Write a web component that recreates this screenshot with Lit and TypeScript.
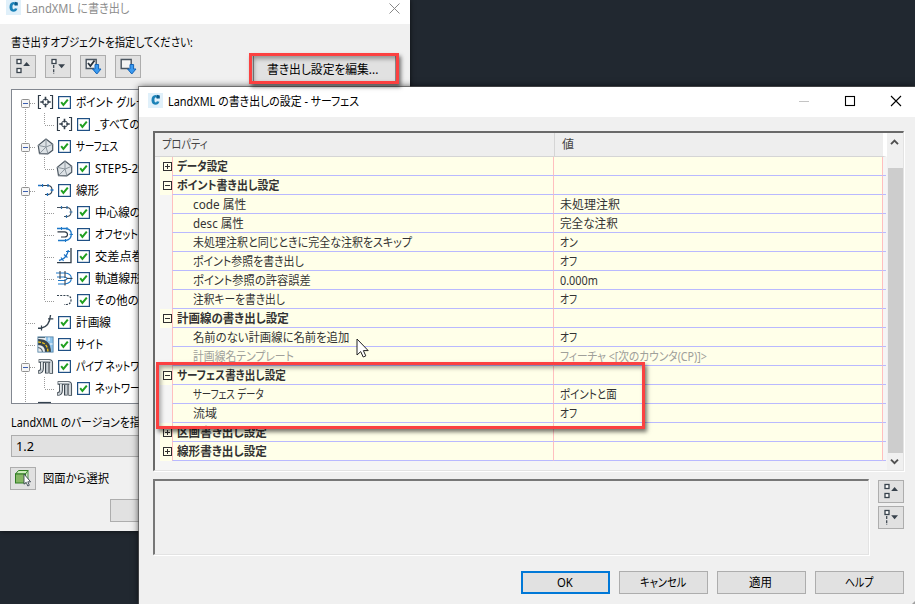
import { LitElement, html, svg, css, nothing } from "lit";
import { customElement, property } from "lit/decorators.js";
import { classMap } from "lit/directives/class-map.js";

/** A single-line label condensed or widened to the given width. */
@customElement("fit-label")
class FitLabel extends LitElement {
  @property() text = "";
  @property({ type: Number }) w = 0;

  static styles = css`
    :host { display: block; flex: none; white-space: pre; }
    .t { display: inline-block; transform-origin: 0 50%; font-feature-settings: "palt"; }
  `;

  render() {
    return html`<span class="t">${this.text}</span>`;
  }

  updated() {
    const span = this.renderRoot.querySelector(".t") as HTMLElement;
    this.style.width = this.w + "px";
    span.style.transform = "none";
    const natural = span.offsetWidth;
    if (natural) span.style.transform = `scaleX(${this.w / natural})`;
  }
}

const toolIcons: Record<string, unknown> = {
  collapse: svg`
    <rect x="7" y="4.5" width="4" height="4" fill="#fff" stroke="#38424c" stroke-width="1.3"/>
    <rect x="7" y="13.5" width="4" height="4" fill="#fff" stroke="#38424c" stroke-width="1.3"/>
    <path d="M13.2 11L16.6 7L20 11Z" fill="#38424c"/>`,
  expand: svg`
    <rect x="7" y="4.5" width="4" height="4" fill="#fff" stroke="#38424c" stroke-width="1.3"/>
    <path d="M8.7 10V19" stroke="#38424c" stroke-width="1.2" stroke-dasharray="3 1.3"/>
    <path d="M13.2 9.3L16.6 13.3L20 9.3Z" fill="#38424c"/>`,
  check: svg`
    <path d="M14 13.5H6.2V4.5H16.2V9" fill="#f4f4f4" stroke="#4a5560" stroke-width="1.4"/>
    <path d="M8 8L10.4 11L14.5 5.5" fill="none" stroke="#26303a" stroke-width="1.8"/>
    <path d="M15 9.5H18.6V14H21L16.8 19L12.6 14H15Z" fill="#3a9af0" stroke="#1464b8" stroke-width="1"/>`,
  uncheck: svg`
    <path d="M14 13.5H6.2V4.5H16.2V9" fill="#f4f4f4" stroke="#4a5560" stroke-width="1.4"/>
    <path d="M15 9.5H18.6V14H21L16.8 19L12.6 14H15Z" fill="#3a9af0" stroke="#1464b8" stroke-width="1"/>`,
  pick: svg`
    <path d="M5.5 7L8.5 3.5H18L16 7Z" fill="#cdeebb" stroke="#2e7d22"/>
    <path d="M15.5 7L18 3.5V13L15.5 16Z" fill="#d5e8cc" stroke="#2e7d22" stroke-width=".8"/>
    <rect x="5.5" y="7" width="10" height="9" fill="#86b765" stroke="#2e7d22"/>
    <path d="M14 7V17.2L16.2 15.3L17.8 19L19.3 18.3L17.8 14.8H20.6Z" fill="#fff" stroke="#3a4550" stroke-width=".9"/>`,
};

const treeIcons: Record<string, unknown> = {
  points: svg`<g fill="none" stroke="#303c48">
    <path d="M4 1.5H1.5V14.5H4M13 1.5H15.5V14.5H13" stroke-width="1.2"/>
    <circle cx="8.5" cy="8" r="3"/><path d="M8.5 2.8V6.4M8.5 9.6V13.2M3.3 8H6.9M10.1 8H13.7" stroke-width="1.6"/></g>`,
  surface: svg`<path d="M9 1L1.2 7.4L2.5 15.6L11 15.8L15.7 12.2V6.3Z" fill="#dde2e6" stroke="#4c5761" stroke-width="1.2" stroke-linejoin="round"/>
    <path d="M9 1V9L1.2 7.4M9 9L15.7 6.3M9 9L2.5 15.6M9 9L11 15.8" fill="none" stroke="#8c969e"/>`,
  align: svg`<path d="M2 3.5H11.5Q15 4 15 8T11.5 12.5H8" fill="none" stroke="#34424f" stroke-width="1.1"/>
    <path d="M1 3.5H4M5.5 2V5M11 2V5M13.5 8H16.5M10.5 11V14" stroke="#1d72c4" stroke-width="1.3"/>`,
  center: svg`<path d="M1 3.5H11.5Q15 4 15 8T11.5 12.5H8" fill="none" stroke="#46525e" stroke-width="1.1"/>
    <path d="M5.5 2V5M11 2V5M13.5 8H16.5M10.5 11V14" stroke="#2d6ea8" stroke-width="1.2"/>`,
  offset: svg`<path d="M1 2.5H10Q15.3 3.2 15.3 8.2T10 14.5H2" fill="none" stroke="#1d78c8" stroke-width="1.3"/>
    <path d="M1.5 5.8H8.5Q11.5 6 11.5 8.4T8.5 11H5" fill="none" stroke="#2c3742" stroke-width="1.2"/>
    <path d="M5.5 1V4M11 1V4M13.5 8.4H17M9.5 13V16" stroke="#1d78c8"/>`,
  cross: svg`<path d="M1 14.7H15V0" fill="none" stroke="#303c48" stroke-width="1.3"/>
    <path d="M3 12.5Q11 10.5 12.3 2" fill="none" stroke="#1d72c4" stroke-width="1.3"/>
    <path d="M5 9.5L7.5 13M8 6.5L11.5 9.5M10 3.5H14" stroke="#1d72c4" stroke-width="1.2"/>`,
  rail: svg`<path d="M0 3H9Q15.3 3.5 15.3 8.3T9 14H2M1 7H8Q11 7.2 11 8.5T8 10.5H2" fill="none" stroke="#1d78c8" stroke-width="1.1"/>
    <path d="M4 1V9M9 1V8M9 9.5V15.5M11 8.4H16.5" stroke="#2c3742"/>`,
  other: svg`<path d="M1 3.5H11Q15 4 15 8T11 12.5H8" fill="none" stroke="#34424f" stroke-width="1.2" stroke-dasharray="2 1.2"/>`,
  feature: svg`<path d="M1 14.2H4Q12.5 13 13.5 1" fill="none" stroke="#34424f" stroke-width="1.4"/>
    <path d="M11 4.8H16.3M4.5 11.5V16.5" stroke="#34424f" stroke-width="1.2"/>`,
  site: svg`<rect x=".5" y=".5" width="16" height="16" fill="#e9edf0"/>
    <path d="M9 1H16V16H14Q14 8 9 5Z" fill="#8ec4ec"/><path d="M12 1V5M13 8H16" stroke="#fff"/>
    <path d="M1 3Q14 3 14 16H8Q8 9 1 9Z" fill="#36434d"/>
    <path d="M1 6Q10.5 6 11 16" fill="none" stroke="#f0c419" stroke-width="1.4" stroke-dasharray="3 1.2"/>
    <path d="M1 11.5Q5 12 5.5 16M1 1.5H8" fill="none" stroke="#5b6870" stroke-width="1.2"/>
    <rect x=".9" y=".9" width="15.2" height="15.2" fill="none" stroke="#4e7fa3" stroke-width=".8"/>`,
  pipe: svg`<g fill="none" stroke-linejoin="round">
    <path d="M9.8 5V15.5M1.6 3H12.5Q14.2 3 14.2 5V15.7M5 4V10.5Q5 14 1.2 14" stroke="#3a454e" stroke-width="3.7"/>
    <path d="M10.1 5V14.8M2.3 2.9H12.5Q14.2 3 14.2 5V15M5 4V10.5Q5 14 1.9 14" stroke="#c9d0d5" stroke-width="1.9"/>
    <path d="M2.5 2.5H12.5M4.6 4.5V10.5M13.7 5V14.8" stroke="#f6f8f9" stroke-width=".8"/></g>`,
};

interface Node { icon: string; text: string; w: number; child?: boolean; open?: boolean; end?: boolean; }
const nodes: Node[] = [
  { icon: "points", text: "ポイント グループ", w: 79, open: true },
  { icon: "points", text: "_すべてのポ", w: 55, child: true, end: true },
  { icon: "surface", text: "サーフェス", w: 42, open: true },
  { icon: "surface", text: "STEP5-29", w: 50, child: true, end: true },
  { icon: "align", text: "線形", w: 23, open: true },
  { icon: "center", text: "中心線の線", w: 58, child: true },
  { icon: "offset", text: "オフセット", w: 43, child: true },
  { icon: "cross", text: "交差点巻き", w: 60, child: true },
  { icon: "rail", text: "軌道線形", w: 47, child: true },
  { icon: "other", text: "その他の線", w: 55, child: true, end: true },
  { icon: "feature", text: "計画線", w: 35 },
  { icon: "site", text: "サイト", w: 27 },
  { icon: "pipe", text: "パイプ ネットワーク", w: 82, open: true },
  { icon: "pipe", text: "ネットワーク", w: 54, child: true, end: true },
];

interface Row { name: string; w: number; group?: "+" | "-"; value?: string; vw?: number; off?: boolean; }
const rows: Row[] = [
  { name: "データ設定", w: 51, group: "+" },
  { name: "ポイント書き出し設定", w: 102, group: "-" },
  { name: "code 属性", w: 53, value: "未処理注釈", vw: 60 },
  { name: "desc 属性", w: 51, value: "完全な注釈", vw: 58 },
  { name: "未処理注釈と同じときに完全な注釈をスキップ", w: 219, value: "オン", vw: 18 },
  { name: "ポイント参照を書き出し", w: 111, value: "オフ", vw: 17 },
  { name: "ポイント参照の許容誤差", w: 118, value: "0.000m", vw: 38 },
  { name: "注釈キーを書き出し", w: 92, value: "オフ", vw: 17 },
  { name: "計画線の書き出し設定", w: 112, group: "-" },
  { name: "名前のない計画線に名前を追加", w: 156, value: "オフ", vw: 17 },
  { name: "計画線名テンプレート", w: 101, value: "フィーチャ <[次のカウンタ(CP)]>", vw: 147, off: true },
  { name: "サーフェス書き出し設定", w: 109, group: "-" },
  { name: "サーフェス データ", w: 71, value: "ポイントと面", vw: 57 },
  { name: "流域", w: 24, value: "オフ", vw: 17 },
  { name: "区画書き出し設定", w: 90, group: "+" },
  { name: "線形書き出し設定", w: 90, group: "+" },
];

const toolButton = (name: string) => html`<button class="tool">
  <svg width="24" height="21" viewBox="1 1 24 21">${toolIcons[name]}</svg></button>`;

const appIcon = html`<svg class="app" width="15" height="15" viewBox="0 0 15 15">
  <rect width="15" height="15" fill="#e0f0fa"/>
  <path d="M11.2 4.4Q10 1.9 7.5 1.9Q3.5 2.1 3.5 7.2Q3.7 11.7 8 11.7Q10.6 11.5 11.5 8.8L8.8 8.2Q8.5 9.6 7.7 9.6Q6.3 9.3 6.4 6.8Q6.5 4.2 7.6 4.2Q8.5 4.3 8.8 5.6Z" fill="#1b82b8"/>
  <path d="M8.8 1.8L11.8 2.4V5.6L8.8 5.6Z" fill="#0b5c8c"/></svg>`;

@customElement("app-root")
class AppRoot extends LitElement {
  static styles = css`
    :host {
      display: block; position: relative; width: 915px; height: 604px; overflow: hidden;
      background: #212830; color: #000;
      font: 12px/18px "Noto Sans", "Noto Sans CJK JP", sans-serif;
    }
    * { box-sizing: border-box; }
    svg { display: block; flex: none; }
    button { margin: 0; padding: 0; font: inherit; color: inherit; background: #e1e1e1; border: 1px solid #adadad; display: flex; align-items: center; justify-content: center; }
    .tool { width: 26px; height: 23px; flex: none; }
    .export { position: absolute; left: 0; top: 0; width: 410px; height: 531px; background: #f0f0f0; box-shadow: 0 0 5px #000a; }
    .bar { display: flex; background: #fff; }
    .export .bar { height: 24px; color: #8d8d8d; padding-left: 6px; }
    .export .bar fit-label { margin-left: 5px; }
    .export .bar .x { margin: 3px 10px 0 auto; }
    .ask { margin: 10px 0 0 11px; height: 18px; }
    .tools { display: flex; gap: 9px; margin: 3px 0 0 10px; height: 23px; }
    .edit { width: 143px; height: 27px; margin: 0 0 0 103px; padding: 2px 4px 0 0; border-color: #8c8c8c; }
    .tree { margin: 11px 12px 0 11px; height: 315px; border: 1px solid #828790; background: #fff; overflow: hidden; padding-top: 1px; }
    .node { display: flex; height: 22px; align-items: center; }
    .node .icon { margin: 0 4px 0 1px; }
    .node .box { margin-right: 5px; }
    .node fit-label { padding-top: 1px; }
    .ver { margin: 10px 0 0 11px; height: 17px; }
    .combo { display: flex; align-items: center; margin: 4px 12px 0 11px; height: 22px; border: 1px solid #adadad; background: #e1e1e1; padding: 1px 0 0 4px; }
    .pick { display: flex; align-items: center; gap: 7px; margin: 10px 0 0 10px; height: 23px; }
    .foot { margin: 9px 0 0 110px; width: 89px; height: 23px; }

    .dialog { position: absolute; left: 139px; top: 87px; width: 776px; height: 517px; background: #f0f0f0; box-shadow: 0 0 0 1px #555a, 0 0 7px #000b; }
    .dialog .bar { height: 30px; padding: 6px 13px 0 9px; }
    .dialog .bar fit-label { margin-left: 5px; }
    .dialog .bar .win { margin: 2px 0 0 auto; }
    .grid { display: flex; margin: 14px 10px 0 14px; width: 751px; height: 340px; border: solid; border-width: 2px 1px 1px 2px; border-color: #696969 #e3e3e3 #e3e3e3 #696969; box-shadow: 1px 1px 0 #fff; background: #f5f5f5; }
    .cols { width: 732px; flex: none; }
    .head { display: flex; height: 24px; background: #eee; border-bottom: 1px solid #d5d5d5; border-right: 4px solid #fff; color: #444; align-items: center; }
    .head .k { width: 400px; height: 23px; padding: 3px 0 0 7px; border-right: 1px solid #d5d5d5; }
    .head .v { padding: 1px 0 0 7px; }
    .row { display: flex; height: 19px; color: #333; }
    .gut { width: 17px; padding: 5px 0 0 8px; flex: none; }
    .group .gut { background: linear-gradient(90deg, #f5f5f5 5px, #ffffe9 5px); }
    .name { width: 381px; border-left: 1px solid #ffbfbf; border-bottom: 1px solid #b9b9ff; background: #ffffe9; padding: 1px 0 0 20px; flex: none; }
    .group .name { font-weight: 600; padding-left: 4px; }
    .val { width: 330px; border: solid; border-width: 0 1px 1px 1px; border-color: #ffbfbf #ffbfbf #b9b9ff #ffbfbf; background: #ffffe9; padding: 1px 0 0 6px; flex: none; }
    .tail { width: 3px; border-bottom: 1px solid #b9b9ff; }
    .off { color: #a0a09a; }
    .scroll { width: 16px; display: flex; flex-direction: column; background: #f0f0f0; }
    .up, .down { height: 35px; padding: 6px 0 0 3px; }
    .down { height: 17px; padding-top: 5px; }
    .thumb { height: 285px; width: 15px; margin-left: 1px; background: #cdcdcd; }
    .lower { display: flex; margin: 8px 0 0 14px; height: 77px; gap: 9px; }
    .desc { width: 716px; height: 76px; border: solid; border-width: 2px 1px 1px 2px; border-color: #777 #e3e3e3 #e3e3e3 #777; box-shadow: 1px 1px 0 #fff; }
    .side { display: flex; flex-direction: column; gap: 3px; padding-top: 1px; }
    .actions { display: flex; justify-content: flex-end; gap: 9px; margin: 15px 11px 0 0; }
    .actions button { width: 89px; height: 23px; padding-right: 2px; }
    .actions .ok { border: 2px solid #0078d7; }
    .mark { position: absolute; border: 3px solid #fb4141; box-shadow: 2px 3px 4px #0008, inset 2px 3px 4px #0005; }
    .m1 { left: 249px; top: 53px; width: 150px; height: 31px; }
    .m2 { left: 156px; top: 362px; width: 489px; height: 67px; }
    .cursor { position: absolute; left: 356px; top: 338px; }
    .grip { position: absolute; right: 0; bottom: 0; }
  `;

  private node(n: Node) {
    const w = n.child ? 43 : 24;
    return html`<div class="node">
      <svg width=${w} height="22" viewBox="0 0 ${w} 22" fill="none" stroke="#9a9a9a" stroke-dasharray="1 1">
        <path d="M13.5 ${n === nodes[0] ? 12 : 0}V22"/>
        ${n.child
          ? svg`<path d="M32.5 0V${n.end ? 12 : 22}M33 12.5H42"/>`
          : svg`<path d="M14 12.5H23"/>`}
        ${n.open
          ? svg`<rect x="9.5" y="8.5" width="8" height="8" rx="1" fill="#f6f6f6" stroke="#919191" stroke-dasharray="none"/>
              <path d="M11 12.5H16" stroke="#3c5fb0" stroke-dasharray="none"/>`
          : nothing}
      </svg>
      <svg class="icon" width="17" height="17" viewBox="0 0 17 17">${treeIcons[n.icon]}</svg>
      <svg class="box" width="13" height="13" viewBox="0 0 13 13"><rect x=".6" y=".6" width="11.8" height="11.8" fill="#fff" stroke="#1f5084" stroke-width="1.2"/>
        <path d="M3.2 6.2L5.4 9L9.8 3.6" fill="none" stroke="#20a020" stroke-width="2"/></svg>
      <fit-label .text=${n.text} .w=${n.w}></fit-label>
    </div>`;
  }

  private row(r: Row) {
    return html`<div class=${classMap({ row: true, group: !!r.group, off: !!r.off })}>
      <div class="gut">${r.group
        ? html`<svg width="9" height="9" viewBox="0 0 9 9" fill="none" stroke="#303030"><rect x=".5" y=".5" width="8" height="8"/>
            <path d=${r.group === "+" ? "M2 4.5H7M4.5 2V7" : "M2 4.5H7"}/></svg>`
        : nothing}</div>
      <div class="name"><fit-label .text=${r.name} .w=${r.w}></fit-label></div>
      <div class="val">${r.value ? html`<fit-label .text=${r.value} .w=${r.vw ?? 0}></fit-label>` : nothing}</div>
      <div class="tail"></div>
    </div>`;
  }

  render() {
    return html`
      <section class="export">
        <div class="bar">${appIcon}
          <fit-label .text=${"LandXML に書き出し"} .w=${103}></fit-label>
          <svg class="x" width="11" height="11" viewBox="0 0 11 11"><path d="M.5 .5L10.5 10.5M10.5 .5L.5 10.5" stroke="#888"/></svg>
        </div>
        <div class="ask"><fit-label .text=${"書き出すオブジェクトを指定してください:"} .w=${182}></fit-label></div>
        <div class="tools">
          ${["collapse", "expand", "check", "uncheck"].map(toolButton)}
          <button class="edit"><fit-label .text=${"書き出し設定を編集..."} .w=${111}></fit-label></button>
        </div>
        <div class="tree">
          ${nodes.map((n) => this.node(n))}
          <svg width="60" height="5" viewBox="0 0 60 5"><path d="M13.5 0V5" stroke="#9a9a9a" stroke-dasharray="1 1"/><path d="M26 3.5H39" stroke="#34424f" stroke-width="1.2"/></svg>
        </div>
        <div class="ver"><fit-label .text=${"LandXML のバージョンを指定:"} .w=${143}></fit-label></div>
        <div class="combo"><fit-label .text=${"1.2"} .w=${18}></fit-label></div>
        <div class="pick">${toolButton("pick")}<fit-label .text=${"図面から選択"} .w=${66}></fit-label></div>
        <button class="foot"></button>
      </section>

      <section class="dialog">
        <div class="bar">${appIcon}
          <fit-label .text=${"LandXML の書き出しの設定 - サーフェス"} .w=${191}></fit-label>
          <svg class="win" width="103" height="12" viewBox="0 0 103 12" fill="none">
            <path d="M0 6.5H10" stroke="#c4c4c4"/><rect x="46.5" y="1.5" width="9" height="9" stroke="#000" stroke-width="1.1"/>
            <path d="M92 1L102 11M102 1L92 11" stroke="#000" stroke-width="1.1"/>
          </svg>
        </div>
        <div class="grid">
          <div class="cols">
            <div class="head">
              <div class="k"><fit-label .text=${"プロパティ"} .w=${46}></fit-label></div>
              <div class="v"><fit-label .text=${"値"} .w=${12}></fit-label></div>
            </div>
            ${rows.map((r) => this.row(r))}
          </div>
          <div class="scroll">
            <div class="up"><svg width="9" height="7" viewBox="0 0 9 7"><path d="M1 5.2L4.5 1.7L8 5.2" fill="none" stroke="#505050" stroke-width="1.9"/></svg></div>
            <div class="thumb"></div>
            <div class="down"><svg width="9" height="7" viewBox="0 0 9 7"><path d="M1 1.7L4.5 5.2L8 1.7" fill="none" stroke="#505050" stroke-width="1.9"/></svg></div>
          </div>
        </div>
        <div class="lower">
          <div class="desc"></div>
          <div class="side">${toolButton("collapse")}${toolButton("expand")}</div>
        </div>
        <div class="actions">
          <button class="ok"><fit-label .text=${"OK"} .w=${16}></fit-label></button>
          <button><fit-label .text=${"キャンセル"} .w=${46}></fit-label></button>
          <button><fit-label .text=${"適用"} .w=${23}></fit-label></button>
          <button><fit-label .text=${"ヘルプ"} .w=${28}></fit-label></button>
        </div>
        <svg class="grip" width="4" height="4" viewBox="0 0 4 4"><path d="M1 4L4 1V4Z" fill="#a0a0a0"/></svg>
      </section>

      <div class="mark m1"></div>
      <div class="mark m2"></div>
      <svg class="cursor" width="13" height="20" viewBox="0 0 13 20"><path d="M1 1V17L4.7 13.6L7.2 19L9.8 17.9L7.4 12.6H12.2Z" fill="#fff" stroke="#222"/></svg>
    `;
  }
}
